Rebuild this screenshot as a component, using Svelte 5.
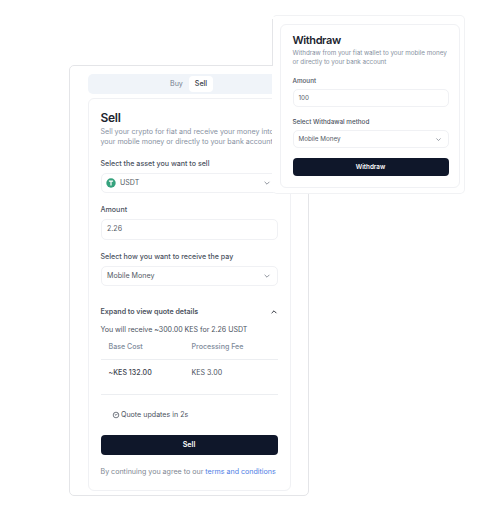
<script>
  const quote = [
    { label: 'Base Cost', value: '~KES 132.00' },
    { label: 'Processing Fee', value: 'KES 3.00' }
  ];
</script>

{#snippet chevron(up = false)}
  <svg class="chevron" class:up viewBox="0 0 8 8" aria-hidden="true">
    <path d="M1.6 2.8 4 5.2 6.4 2.8" />
  </svg>
{/snippet}

<main>
  <section class="sell-window">
    <nav><span class="buy">Buy</span><span class="tab">Sell</span></nav>
    <div class="card">
      <h1>Sell</h1>
      <p class="desc">Sell your crypto for fiat and receive your money into<br />your mobile money or directly to your bank account</p>

      <div class="label asset">Select the asset you want to sell</div>
      <div class="field">
        <svg class="coin" viewBox="0 0 10 10" aria-hidden="true">
          <circle cx="5" cy="5" r="4.7" />
          <path d="M2.9 3.1h4.2M5 3v4.6" />
        </svg>
        <span class="grow">USDT</span>{@render chevron()}
      </div>

      <div class="label">Amount</div>
      <div class="field">2.26</div>

      <div class="label receive">Select how you want to receive the pay</div>
      <div class="field"><span class="grow">Mobile Money</span>{@render chevron()}</div>

      <div class="details">
        <div class="expand"><span class="grow">Expand to view quote details</span>{@render chevron(true)}</div>
        <div class="total">You will receive ~300.00 KES for 2.26 USDT</div>
        <div class="row head">{#each quote as q}<span>{q.label}</span>{/each}</div>
        <div class="row values">{#each quote as q}<span>{q.value}</span>{/each}</div>
        <div class="timer">
          <svg viewBox="0 0 8 8" aria-hidden="true"><circle cx="4" cy="4" r="2.8" /><path d="M2.7 3.2 4 4.3 5.6 2.6" /></svg>
          Quote updates in 2s
        </div>
        <button>Sell</button>
        <div class="terms">By continuing you agree to our <a href="#terms">terms and conditions</a></div>
      </div>
    </div>
  </section>

  <section class="withdraw-window">
    <div class="card">
      <h2>Withdraw</h2>
      <p class="desc">Withdraw from your fiat wallet to your mobile money<br />or directly to your bank account</p>
      <div class="label">Amount</div>
      <div class="field">100</div>
      <div class="label method">Select Withdawal method</div>
      <div class="field"><span class="grow">Mobile Money</span>{@render chevron()}</div>
      <button>Withdraw</button>
    </div>
  </section>
</main>

<style>
  :global(body) { background: #fff; }
  main {
    position: relative;
    box-sizing: border-box;
    width: 481px;
    height: 519px;
    padding: 65px 0 0 69px;
    overflow: hidden;
    font: 400 7.1px/10px Inter, sans-serif;
    font-feature-settings: 'calt' 0;
    color: #4b5260;
  }
  main :where(*) { box-sizing: border-box; }
  h1, h2, p { margin: 0; }
  h1, h2 { color: #20242e; font-weight: 600; }
  .grow { flex: 1; }
  .sell-window {
    width: 240px;
    height: 431px;
    padding: 8px 17px 0 18px;
    border: 1px solid #e4e5e8;
    border-radius: 5px;
  }
  nav {
    display: flex;
    align-items: center;
    width: 203px;
    height: 20px;
    padding-left: 82px;
    border-radius: 5px;
    background: #f0f4f9;
    color: #75808f;
  }
  .buy { width: 19px; }
  .tab {
    width: 24px;
    height: 16px;
    border-radius: 4px;
    background: #fff;
    color: #383e49;
    font-weight: 500;
    line-height: 16px;
    text-align: center;
  }
  .sell-window .card {
    width: 203px;
    height: 393px;
    margin-top: 4px;
    padding: 10.5px 12px 0 11.5px;
    border: 1px solid #f0f1f4;
    border-radius: 6px;
  }
  h1 { font-size: 12px; line-height: 16px; letter-spacing: -.3px; }
  .desc { color: #8791a1; white-space: nowrap; }
  .sell-window .desc { margin-top: 1px; letter-spacing: -.01px; }
  .label { color: #4b5260; white-space: nowrap; font-weight: 500; }
  .sell-window .label { margin-top: 12px; }
  .field {
    display: flex;
    align-items: center;
    border: 1px solid #f0f1f4;
    border-radius: 5px;
    color: #545a65;
  }
  .sell-window .field { height: 20.5px; margin-top: 4px; padding: 0 6px 0 5.5px; }
  .chevron { width: 8px; height: 8px; fill: none; stroke: #858a94; stroke-width: .9; }
  .chevron.up { transform: rotate(180deg); stroke: #20242e; }
  .coin { width: 10px; height: 10px; margin: 0 4px 0 -1px; }
  .coin circle { fill: #35a27d; }
  .coin path { fill: none; stroke: #fff; stroke-width: 1.2; }
  .details { width: 177px; margin-top: 20.5px; white-space: nowrap; }
  .expand { display: flex; align-items: center; height: 10px; font-weight: 600; letter-spacing: -.02px; }
  .total { margin-top: 8px; letter-spacing: -.03px; }
  .row { display: flex; padding-left: 8px; border-bottom: 1px solid #eceef1; }
  .row span:first-child { width: 83px; }
  .head { height: 25px; padding-top: 7.5px; color: #808b9b; font-weight: 500; }
  .values { height: 35px; padding-top: 8px; }
  .values span:first-child { font-weight: 500; color: #3d434e; }
  .timer { display: flex; align-items: center; gap: 1px; height: 10px; margin: 15px 0 15px 11.5px; }
  .timer svg { width: 8px; height: 8px; fill: none; stroke: #555c67; stroke-width: .8; }
  button {
    display: block;
    width: 100%;
    padding: 0;
    border: 0;
    border-radius: 4px;
    background: #0f172a;
    color: #fff;
    font: 600 7.1px/20.5px Inter, sans-serif;
  }
  .terms { margin-top: 12px; color: #7e8692; }
  a { color: #4c7de5; text-decoration: none; }
  .withdraw-window {
    position: absolute;
    left: 272px;
    top: 15px;
    width: 193px;
    height: 179px;
    padding: 8px 7px;
    border: 1px solid #f1f2f4;
    border-left-color: transparent;
    border-radius: 5px;
    background: #fff;
    font-size: 6.3px;
    line-height: 9px;
  }
  /* The left edge is only outlined above the window it overlaps. */
  .withdraw-window::before {
    content: '';
    position: absolute;
    left: -1px;
    top: 3px;
    width: 1px;
    height: 47px;
    background: #e4e5e8;
  }
  .withdraw-window .card {
    width: 180px;
    height: 164px;
    padding: 8px 12px 0 11.5px;
    border: 1px solid #f0f1f4;
    border-radius: 6px;
  }
  h2 { font-size: 11px; line-height: 15px; letter-spacing: -.4px; }
  .withdraw-window .desc { margin-top: 1px; letter-spacing: -.03px; }
  .withdraw-window .label { margin-top: 11px; }
  .withdraw-window .desc + .label { margin-top: 10px; }
  .withdraw-window .field { width: 156px; height: 18px; margin-top: 3px; padding: 0 6px 0 5px; }
  .withdraw-window .chevron { width: 7px; height: 7px; }
  .withdraw-window button { width: 156px; margin-top: 10px; font-size: 6.3px; line-height: 18px; }
</style>
